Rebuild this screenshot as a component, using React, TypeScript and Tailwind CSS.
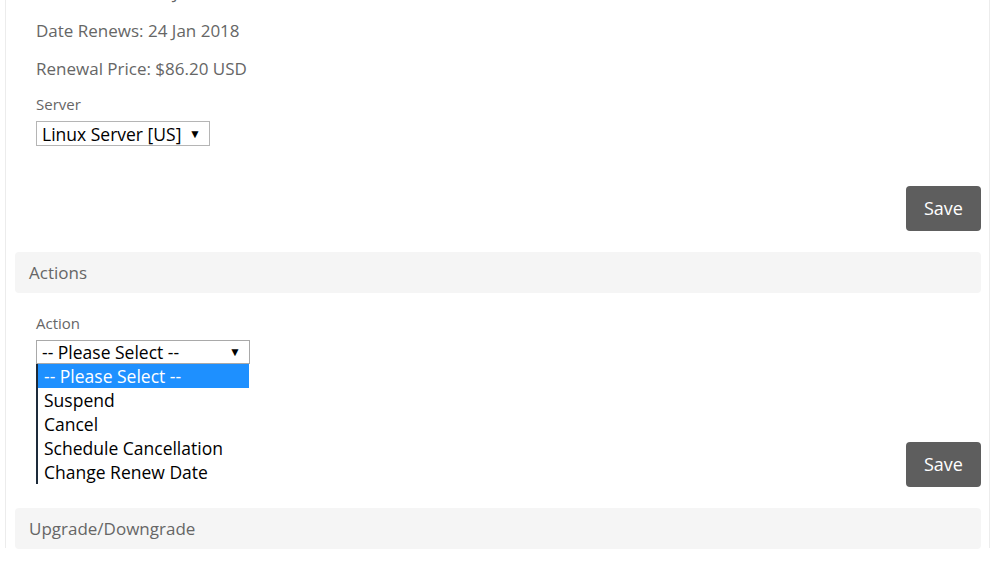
import { useState } from "react";

const font = { fontFamily: '"Open Sans", "Liberation Sans", sans-serif' };

function SaveButton() {
  return (
    <div className="flex justify-end">
      <button
        type="button"
        className="h-[45px] w-[75px] rounded-[4px] bg-[#5e5e5e] text-[18px] text-white"
      >
        Save
      </button>
    </div>
  );
}

function PanelHeader({ title }: { title: string }) {
  return (
    <div className="flex h-[41px] items-center rounded-[4px] bg-[#f5f5f5] px-[14px] text-[17px] text-[#666]">
      {title}
    </div>
  );
}

const actions = [
  "-- Please Select --",
  "Suspend",
  "Cancel",
  "Schedule Cancellation",
  "Change Renew Date",
];

export default function App() {
  const [active] = useState(0);

  return (
    <div className="h-[567px] overflow-hidden bg-white" style={font}>
      <div className="ml-[5px] mr-[10px] h-full border-x border-[#ececec] pl-[9px] pr-[8px]">
        {/* details */}
        <div className="-mt-[19px] pl-[21px] text-[17px] leading-[24px] text-[#666]">
          <p className="mb-[14px]">Date Created: 24 Jan 2017</p>
          <p className="mb-[14px]">Date Renews: 24 Jan 2018</p>
          <p>Renewal Price: $86.20 USD</p>
          <p className="mt-[13px] text-[15px] leading-[20px]">Server</p>
          <div className="mt-[7px] flex h-[25px] w-[174px] items-center border border-[#b5b5b5] pl-[5px] pr-[8px] text-[17.5px] text-black">
            <span>Linux Server [US]</span>
            <span className="ml-auto text-[12px]">▼</span>
          </div>
        </div>

        <div className="mt-[40px]">
          <SaveButton />
        </div>

        <div className="mt-[21px]">
          <PanelHeader title="Actions" />
        </div>

        <div className="pl-[21px] text-[#666]">
          <p className="mt-[20px] text-[15px] leading-[20px]">Action</p>
          <div className="relative mt-[7px] w-[214px]">
            <div className="flex h-[24px] items-center border border-[#a9a9a9] pl-[5px] pr-[8px] text-[17.5px] text-black">
              <span>-- Please Select --</span>
              <span className="ml-auto text-[12px]">▼</span>
            </div>
            <ul className="absolute left-0 top-[24px] z-10 w-[213px] border-l-2 border-[#1d2b3a] bg-white text-[17.5px] leading-[24px] text-black">
              {actions.map((a, i) => (
                <li
                  key={a}
                  className={
                    i === active
                      ? "h-[24px] bg-[#1e90ff] pl-[6px] text-white"
                      : "h-[24px] pl-[6px]"
                  }
                >
                  {a}
                </li>
              ))}
            </ul>
          </div>
        </div>

        <div className="mt-[78px]">
          <SaveButton />
        </div>

        <div className="mt-[21px]">
          <PanelHeader title="Upgrade/Downgrade" />
        </div>
      </div>
    </div>
  );
}
